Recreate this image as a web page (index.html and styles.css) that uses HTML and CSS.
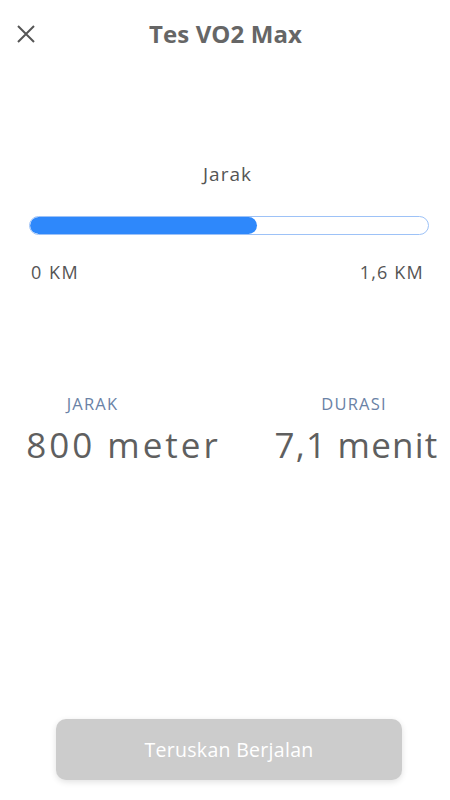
FILE: index.html
```html
<!doctype html>
<html>
<head>
<meta charset="utf-8">
<title>Tes VO2 Max</title>
<link rel="stylesheet" href="styles.css">
</head>
<body>
	<div class="page">
		<div class="header">
			<a href="javascript:;" class="close">
				<svg width="18" height="18" viewBox="0 0 18 18"><path d="M1 1L17 17M17 1L1 17" stroke="#555" stroke-width="2" fill="none"/></svg>
			</a>
			<h1 class="title">Tes VO2 Max</h1>
		</div>
		<div class="progress">
			<p class="progress-label">Jarak</p>
			<div class="track"><div class="fill" style="width:57%"></div></div>
			<div class="range">
				<span>0 KM</span>
				<span>1,6 KM</span>
			</div>
		</div>
		<div class="stats">
			<div class="stat stat-left">
				<p class="stat-name">JARAK</p>
				<p class="stat-value">800 meter</p>
			</div>
			<div class="stat stat-right">
				<p class="stat-name">DURASI</p>
				<p class="stat-value">7,1 menit</p>
			</div>
		</div>
		<div class="footer">
			<a href="javascript:;" class="btn">Teruskan Berjalan</a>
		</div>
	</div>
</body>
</html>
```

FILE: styles.css
```css
*{margin:0; padding:0; box-sizing:border-box;}
body{background:#fff; font-family:"Open Sans","Noto Sans",sans-serif; color:#5f5f5f;}
.page{width:450px; height:800px; display:flex; flex-direction:column;}

.header{height:68px; position:relative; display:flex; align-items:center; justify-content:center;}
.close{position:absolute; left:17px; top:25px; width:18px; height:18px; display:block;}
.close svg{display:block;}
.title{font-size:24px; font-weight:700; color:#666; letter-spacing:0.1px; margin-left:1px; margin-top:-2px;}

.progress{padding:93px 21px 0 29px;}
.progress-label{text-align:center; font-size:19px; color:#555; line-height:26px; margin-left:-3px; letter-spacing:1px;}
.track{margin-top:29px; height:19px; border:1px solid #9dc2f7; border-radius:10px; overflow:hidden;}
.fill{height:100%; background:#2e88fb; border-radius:10px;}
.range{display:flex; justify-content:space-between; margin-top:26px; font-size:18px; line-height:22px; color:#555; padding:0 5px 0 2px; letter-spacing:1.2px;}
.range span:first-child{letter-spacing:1.5px;}

.stats{display:flex; margin-top:111px;}
.stat{flex:1; text-align:center;}
.stat-name{font-size:16.5px; color:#6a82a6; line-height:20px; letter-spacing:1.2px;}
.stat-value{font-size:35px; color:#5f5f5f; line-height:44px; margin-top:9px; white-space:nowrap;}
.stat-left .stat-name{padding-right:40px;}
.stat-left .stat-value{padding-left:22px; letter-spacing:3px;}
.stat-right .stat-name{padding-left:33px;}
.stat-right .stat-value{padding-left:38px; letter-spacing:1.2px;}

.footer{margin-top:auto; padding:0 48px 20px 56px;}
.btn{display:block; height:61px; line-height:61px; text-align:center; background:#cccccc; border-radius:10px; color:#fff; font-size:19.5px; letter-spacing:0.3px; text-decoration:none; box-shadow:0 2px 6px rgba(0,0,0,0.12);}
```
